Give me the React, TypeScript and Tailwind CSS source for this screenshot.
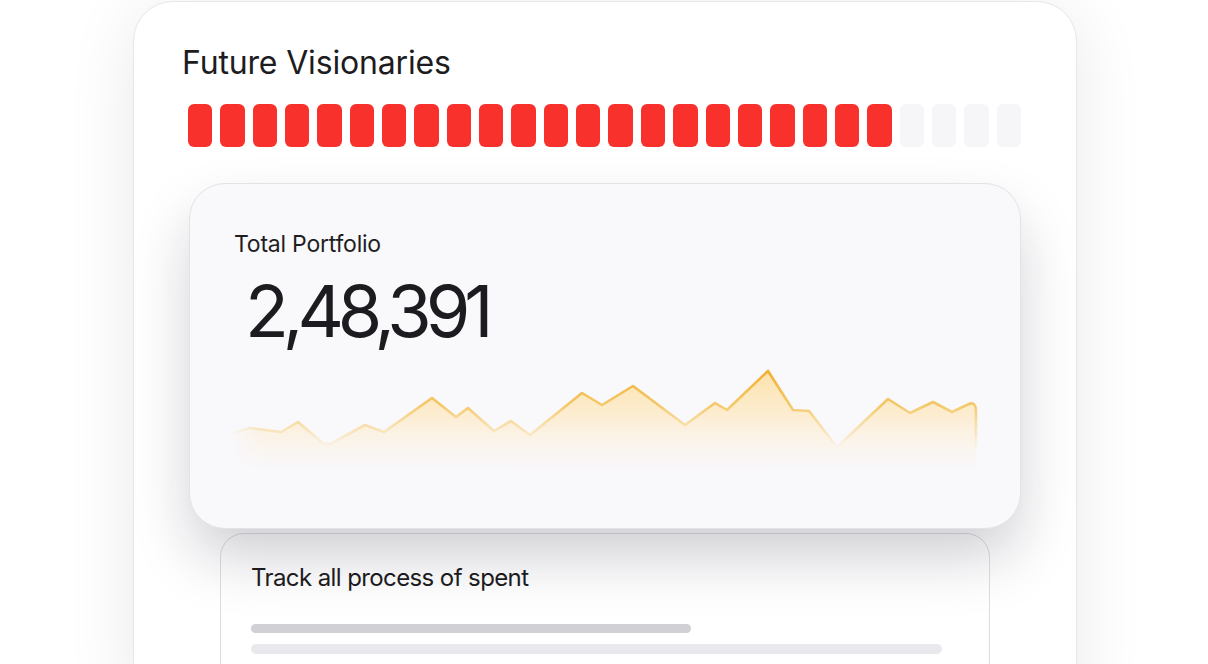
import React from "react";

const pts: [number, number][] = [
  [233, 433], [250, 428], [281, 432], [298, 422], [323, 443], [330, 444], [365, 425], [384, 432],
  [432, 398], [456, 417], [468, 408], [494, 431], [511, 421], [530, 435], [582, 393], [602, 405],
  [633, 386], [685, 425], [715, 403], [727, 410], [768, 371], [793, 410], [809, 411], [837, 447],
  [888, 399], [910, 413], [933, 402], [952, 412], [969, 404],
];

function Chart() {
  const line = "M" + pts.map((p) => p.join(",")).join(" L") + " Q976,401 976,412 L976,470";
  const fill = line + " L976,476 L233,476 Z";
  return (
    <svg width={832} height={120} viewBox="189 360 832 120" className="block">
      <defs>
        <linearGradient id="fillG" x1="0" y1="370" x2="0" y2="472" gradientUnits="userSpaceOnUse">
          <stop offset="0" stopColor="#fddfa0" stopOpacity="0.9" />
          <stop offset="0.45" stopColor="#fde9c4" stopOpacity="0.75" />
          <stop offset="1" stopColor="#fdf3e2" stopOpacity="0" />
        </linearGradient>
        <linearGradient id="lineG" x1="0" y1="368" x2="0" y2="452" gradientUnits="userSpaceOnUse">
          <stop offset="0" stopColor="#eeaf2c" stopOpacity="1" />
          <stop offset="0.45" stopColor="#f3c45e" stopOpacity="0.9" />
          <stop offset="0.8" stopColor="#f7d893" stopOpacity="0.45" />
          <stop offset="1" stopColor="#fae6bb" stopOpacity="0" />
        </linearGradient>
        <linearGradient id="maskG" x1="229" y1="0" x2="264" y2="0" gradientUnits="userSpaceOnUse">
          <stop offset="0" stopColor="#fff" stopOpacity="0" />
          <stop offset="1" stopColor="#fff" stopOpacity="1" />
        </linearGradient>
        <mask id="fadeM" maskUnits="userSpaceOnUse" x="189" y="360" width="832" height="120">
          <rect x="189" y="360" width="832" height="120" fill="url(#maskG)" />
        </mask>
      </defs>
      <g mask="url(#fadeM)">
        <path d={fill} fill="url(#fillG)" />
        <path d={line} fill="none" stroke="url(#lineG)" strokeWidth={2.6} strokeLinejoin="round" strokeLinecap="round" />
      </g>
    </svg>
  );
}

export default function App() {
  const bars = Array.from({ length: 26 }, (_, i) => i < 22);
  return (
    <div
      className="w-[1208px] h-[664px] overflow-hidden bg-white"
      style={{ fontFamily: "Inter, 'Noto Sans', sans-serif" }}
    >
      <div className="ml-[133px] mt-[1px] w-[944px] h-[720px] rounded-[40px] border border-[#e7e7ea] bg-white shadow-[0_10px_70px_rgba(0,0,0,0.09)] pl-[54px] pr-[55px] pt-[41px]">
        <div className="-ml-[6px] text-[32px] leading-[40px] text-[#1d1c21] tracking-[-0.005em]">
          Future Visionaries
        </div>
        <div className="mt-[21px] flex gap-2 h-[43px]">
          {bars.map((on, i) => (
            <div
              key={i}
              className={on ? "flex-1 rounded-[6px] bg-[#f8312d]" : "flex-1 rounded-[6px] bg-[#f6f5f8]"}
            />
          ))}
        </div>
        <div className="relative z-10 mt-[36px] ml-[1px] h-[346px] rounded-[36px] border border-[#e3e2e7] bg-[#f9f8fb] shadow-[0_30px_60px_-4px_rgba(20,16,40,0.21)] pt-[46px] overflow-hidden">
          <div className="pl-[44px] text-[23px] leading-[28px] text-[#1f1e23] tracking-[-0.01em]">
            Total Portfolio
          </div>
          <div className="mt-[17px] pl-[55px] text-[72px] leading-[72px] text-[#1c1b20] tracking-[-0.085em]">
            2,48,391
          </div>
          <div className="mt-[13px] -ml-[1px]">
            <Chart />
          </div>
        </div>
        <div className="mt-[4px] ml-[32px] mr-[31px] h-[200px] rounded-[24px] border border-[#dedde2] bg-white pt-[28px] px-[30px]">
          <div className="text-[24px] leading-[32px] text-[#1d1c21] tracking-[-0.025em]">
            Track all process of spent
          </div>
          <div className="mt-[30px] h-[9px] w-[440px] rounded-full bg-[#d1d0d4]" />
          <div className="mt-[11px] h-[10px] w-[691px] rounded-full bg-[#e9e8ec]" />
          <div className="mt-[10px] h-[10px] w-[600px] rounded-full bg-[#f3f2f5]" />
        </div>
      </div>
    </div>
  );
}
